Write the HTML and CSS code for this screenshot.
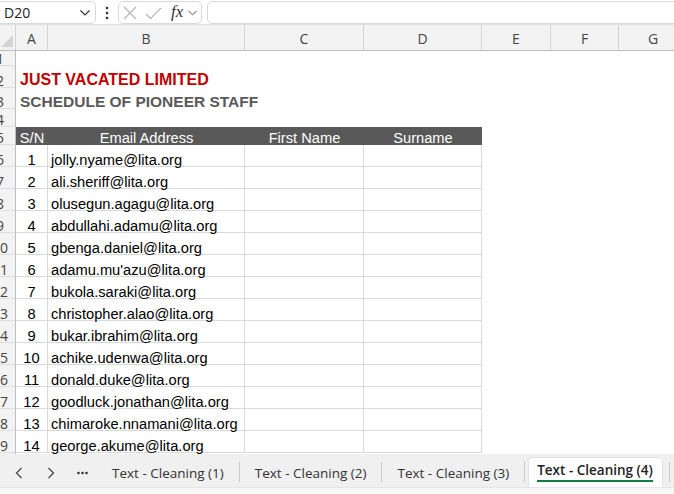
FILE: index.html
```html
<!DOCTYPE html>
<html>
<head>
<meta charset="utf-8">
<link rel="stylesheet" href="styles.css">
</head>
<body>
<div class="fbar">
  <div class="namebox"><span>D20</span>
    <svg class="chev" width="10" height="6" viewBox="0 0 10 6"><path d="M0.5 0.5 L5 5 L9.5 0.5" fill="none" stroke="#333" stroke-width="1.2"/></svg>
  </div>
  <div class="kebab">
    <svg width="4" height="14" viewBox="0 0 4 14"><circle cx="2" cy="2" r="1.3" fill="#333"/><circle cx="2" cy="7" r="1.3" fill="#333"/><circle cx="2" cy="12" r="1.3" fill="#333"/></svg>
  </div>
  <div class="fxbox">
    <svg class="ic-x" width="14" height="14" viewBox="0 0 14 14"><path d="M1 1 L13 13 M13 1 L1 13" stroke="#b4b4b4" stroke-width="1.1"/></svg>
    <svg class="ic-ok" width="17" height="13" viewBox="0 0 17 13"><path d="M1 7 L5.5 11.5 L16 1" fill="none" stroke="#b4b4b4" stroke-width="1.1"/></svg>
    <span class="fx">fx</span>
    <svg class="chev2" width="9" height="6" viewBox="0 0 9 6"><path d="M0.5 0.8 L4.5 4.8 L8.5 0.8" fill="none" stroke="#888" stroke-width="1.1"/></svg>
  </div>
  <div class="formula"></div>
</div>

<div class="sheet">
  <div class="row colhdr">
    <div class="corner"><svg width="12" height="12" viewBox="0 0 12 12"><path d="M12 0 L12 12 L0 12 Z" fill="#d4d4d4"/></svg></div>
    <div class="ch">A</div><div class="ch">B</div><div class="ch">C</div><div class="ch">D</div><div class="ch">E</div><div class="ch">F</div><div class="ch">G</div>
  </div>
  <div class="row r1"><div class="rh"><span>1</span></div></div>
  <div class="row r2"><div class="rh"><span>2</span></div><div class="title">JUST VACATED LIMITED</div></div>
  <div class="row r3"><div class="rh"><span>3</span></div><div class="subtitle">SCHEDULE OF PIONEER STAFF</div></div>
  <div class="row r4"><div class="rh"><span>4</span></div></div>
  <div class="row r5"><div class="rh"><span>5</span></div>
    <div class="th">S/N</div><div class="th">Email Address</div><div class="th">First Name</div><div class="th">Surname</div>
  </div>
  <div class="row dr"><div class="rh"><span>6</span></div><div class="c num">1</div><div class="c em">jolly.nyame@lita.org</div><div class="c"></div><div class="c"></div></div>
  <div class="row dr"><div class="rh"><span>7</span></div><div class="c num">2</div><div class="c em">ali.sheriff@lita.org</div><div class="c"></div><div class="c"></div></div>
  <div class="row dr"><div class="rh"><span>8</span></div><div class="c num">3</div><div class="c em">olusegun.agagu@lita.org</div><div class="c"></div><div class="c"></div></div>
  <div class="row dr"><div class="rh"><span>9</span></div><div class="c num">4</div><div class="c em">abdullahi.adamu@lita.org</div><div class="c"></div><div class="c"></div></div>
  <div class="row dr"><div class="rh"><span>10</span></div><div class="c num">5</div><div class="c em">gbenga.daniel@lita.org</div><div class="c"></div><div class="c"></div></div>
  <div class="row dr"><div class="rh"><span>11</span></div><div class="c num">6</div><div class="c em">adamu.mu'azu@lita.org</div><div class="c"></div><div class="c"></div></div>
  <div class="row dr"><div class="rh"><span>12</span></div><div class="c num">7</div><div class="c em">bukola.saraki@lita.org</div><div class="c"></div><div class="c"></div></div>
  <div class="row dr"><div class="rh"><span>13</span></div><div class="c num">8</div><div class="c em">christopher.alao@lita.org</div><div class="c"></div><div class="c"></div></div>
  <div class="row dr"><div class="rh"><span>14</span></div><div class="c num">9</div><div class="c em">bukar.ibrahim@lita.org</div><div class="c"></div><div class="c"></div></div>
  <div class="row dr"><div class="rh"><span>15</span></div><div class="c num">10</div><div class="c em">achike.udenwa@lita.org</div><div class="c"></div><div class="c"></div></div>
  <div class="row dr"><div class="rh"><span>16</span></div><div class="c num">11</div><div class="c em">donald.duke@lita.org</div><div class="c"></div><div class="c"></div></div>
  <div class="row dr"><div class="rh"><span>17</span></div><div class="c num">12</div><div class="c em">goodluck.jonathan@lita.org</div><div class="c"></div><div class="c"></div></div>
  <div class="row dr"><div class="rh"><span>18</span></div><div class="c num">13</div><div class="c em">chimaroke.nnamani@lita.org</div><div class="c"></div><div class="c"></div></div>
  <div class="row dr"><div class="rh"><span>19</span></div><div class="c num">14</div><div class="c em">george.akume@lita.org</div><div class="c"></div><div class="c"></div></div>
  <div class="row rest"><div class="rh"></div></div>
</div>

<div class="tabbar">
  <div class="nav">
    <svg width="97" height="33" viewBox="0 0 97 33">
      <path d="M21.5 14 L16.5 19 L21.5 24" fill="none" stroke="#444" stroke-width="1.2"/>
      <path d="M48.5 14 L53.5 19 L48.5 24" fill="none" stroke="#444" stroke-width="1.2"/>
      <circle cx="78.5" cy="19" r="1.3" fill="#333"/><circle cx="82.5" cy="19" r="1.3" fill="#333"/><circle cx="86.5" cy="19" r="1.3" fill="#333"/>
    </svg>
  </div>
  <div class="tab">Text - Cleaning (1)</div><div class="sep"></div>
  <div class="tab">Text - Cleaning (2)</div><div class="sep"></div>
  <div class="tab">Text - Cleaning (3)</div><div class="sep"></div>
  <div class="tab active"><span>Text - Cleaning (4)</span></div><div class="sep sep-last"></div>
</div>
<div class="status"></div>
</body>
</html>
```

FILE: styles.css
```css
* { box-sizing: border-box; }
html, body { margin: 0; padding: 0; }
body {
  width: 674px;
  height: 494px;
  overflow: hidden;
  background: #fff;
  font-family: "Liberation Sans", Arial, sans-serif;
}

/* formula bar */
.fbar {
  height: 25px;
  display: flex;
  align-items: flex-start;
  padding-top: 1px;
  background: #fff;
  border-bottom: 1px solid #e2e2e2;
}
.namebox {
  width: 102px;
  height: 23px;
  margin-left: -6px;
  border: 1px solid #d9d9d9;
  border-radius: 5px;
  display: flex;
  align-items: center;
  justify-content: space-between;
  padding: 0 5px 0 9px;
  font: 14px "Open Sans", sans-serif;
  color: #222;
}
.kebab {
  width: 22px;
  height: 23px;
  display: flex;
  align-items: center;
  justify-content: center;
}
.fxbox {
  width: 84px;
  height: 23px;
  border: 1px solid #d9d9d9;
  border-radius: 5px;
  display: flex;
  align-items: center;
}
.ic-x { margin-left: 4px; }
.ic-ok { margin-left: 8px; margin-top: 1px; }
.fx {
  margin-left: 9px;
  font: italic 17px "Liberation Serif", serif;
  color: #333;
  line-height: 17px;
  margin-top: -2px;
}
.chev2 { margin-left: 5px; margin-top: 1px; }
.formula {
  flex: 1;
  height: 23px;
  margin-left: 5px;
  margin-right: -10px;
  border: 1px solid #d9d9d9;
  border-radius: 5px;
}

/* sheet */
.sheet { height: 429px; overflow: hidden; }
.row {
  display: grid;
  grid-template-columns: 16px 32px 197px 119px 118px 69px 68px 69px;
}
.colhdr {
  height: 26px;
  background: #f3f3f3;
  border-bottom: 1px solid #bdbdbd;
}
.corner {
  border-right: 1px solid #d4d4d4;
  display: flex;
  align-items: flex-end;
  justify-content: flex-end;
  padding: 0 2px 3px 0;
}
.ch {
  border-right: 1px solid #d4d4d4;
  display: flex;
  align-items: center;
  justify-content: center;
  font: 14px "Open Sans", sans-serif;
  color: #444;
  padding-top: 1px;
}
.rh {
  background: #f3f3f3;
  border-right: 1px solid #bdbdbd;
  border-bottom: 1px solid #dedede;
  overflow: hidden;
  display: flex;
  align-items: flex-end;
}
.rh span {
  display: block;
  flex: none;
  width: 32px;
  margin-left: -16px;
  text-align: center;
  font: 14px/13px "Open Sans", sans-serif;
  color: #444;
}
.r1 { height: 15px; }
.r2 { height: 22px; }
.r3 { height: 21px; }
.r4 { height: 18px; }
.r5 { height: 18px; }
.dr { height: 22px; }
.rest { height: 30px; }

.title, .subtitle {
  grid-column: 2 / span 4;
  padding-left: 4px;
  display: flex;
  align-items: flex-end;
  white-space: nowrap;
  font-weight: bold;
}
.title { font-size: 16px; line-height: 17px; color: #c00000; }
.subtitle { font-size: 15.5px; line-height: 15px; color: #595959; }

.th {
  background: #595959;
  color: #fff;
  font-size: 14.67px;
  line-height: 13px;
  display: flex;
  align-items: flex-end;
  justify-content: center;
  white-space: nowrap;
}
.c {
  border-right: 1px solid #d9d9d9;
  border-bottom: 1px solid #d9d9d9;
  font-size: 14.67px;
  line-height: 12px;
  color: #000;
  display: flex;
  align-items: flex-end;
  white-space: nowrap;
}
.num { justify-content: center; }
.em { padding-left: 3px; }

/* sheet tabs */
.tabbar {
  height: 33px;
  background: #f0f0f0;
  display: flex;
  align-items: stretch;
  font: 13.5px "Open Sans", sans-serif;
  color: #333;
  white-space: nowrap;
}
.nav { width: 97px; flex: none; }
.nav svg { display: block; }
.tab {
  padding: 5px 15px 0;
  display: flex;
  align-items: center;
}
.sep {
  width: 1px;
  background: #cacaca;
  margin: 8px 0 5px;
  flex: none;
}
.tab.active {
  background: #fff;
  margin: 3px 0 0 3px;
  padding: 0 9px 0 8px;
  border: 1px solid #e3e3e3;
  border-bottom: none;
  border-radius: 5px 5px 0 0;
  font-weight: 600;
  color: #222;
  align-items: flex-start;
}
.tab.active span {
  display: block;
  margin-top: 4px;
  padding-bottom: 1px;
  border-bottom: 2px solid #107c41;
  line-height: 17px;
}
.sep-last { margin-left: 6px; }
.status {
  height: 7px;
  background: #f8f8f8;
  border-top: 1px solid #e6e6e6;
}
```
